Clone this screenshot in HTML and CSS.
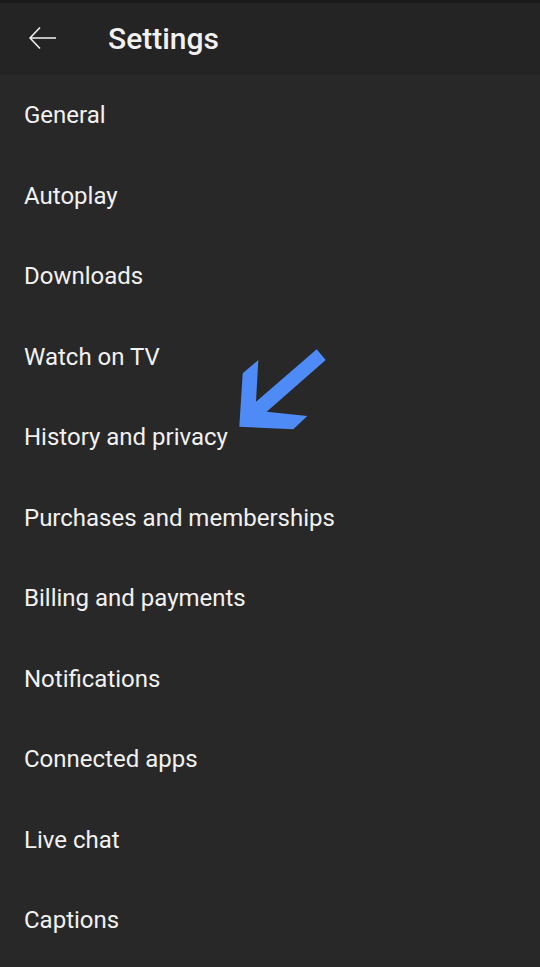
FILE: index.html
```html
<!DOCTYPE html>
<html>
<head>
<meta charset="utf-8">
<link rel="stylesheet" href="styles.css">
</head>
<body>
<div class="screen">
  <div class="statusbar"></div>
  <header class="header">
    <svg class="back" width="28" height="24" viewBox="0 0 28 24"><path d="M1 12 H27 M11 1.5 L1 12 L11 22.5" fill="none" stroke="#f1f1f1" stroke-width="1.6"/></svg>
    <h1 class="title">Settings</h1>
  </header>
  <ul class="list">
    <li class="item">General</li>
    <li class="item">Autoplay</li>
    <li class="item">Downloads</li>
    <li class="item">Watch on TV</li>
    <li class="item">History and privacy</li>
    <li class="item">Purchases and memberships</li>
    <li class="item">Billing and payments</li>
    <li class="item">Notifications</li>
    <li class="item">Connected apps</li>
    <li class="item">Live chat</li>
    <li class="item">Captions</li>
  </ul>
  <svg class="pointer" width="540" height="967" viewBox="0 0 540 967"><polygon points="316.7,349.3 325.7,360 266.7,411.7 307.3,416 293.3,429.3 239.3,426.7 242.7,373.3 258.3,360 256,401.7" fill="#4f8bf6"/></svg>
</div>
</body>
</html>
```
FILE: styles.css
```css
html, body {
  margin: 0;
  padding: 0;
  background: #282828;
}
.screen {
  position: relative;
  width: 540px;
  height: 967px;
  overflow: hidden;
  background: #282828;
  font-family: Roboto, "Noto Sans", sans-serif;
  color: #f1f1f1;
}
.statusbar {
  height: 3px;
  background: #1a1a1a;
}
.header {
  height: 72px;
  background: #242424;
  display: flex;
  align-items: center;
}
.back {
  margin-left: 29px;
  margin-top: -2px;
}
.title {
  margin: -1px 0 0 51px;
  font-size: 30px;
  font-weight: 500;
}
.list {
  list-style: none;
  margin: 0;
  padding: 0;
}
.item {
  height: 80.5px;
  display: flex;
  align-items: center;
  padding-left: 24px;
  font-size: 24px;
}
.pointer {
  position: absolute;
  left: 0;
  top: 0;
  pointer-events: none;
}
```
